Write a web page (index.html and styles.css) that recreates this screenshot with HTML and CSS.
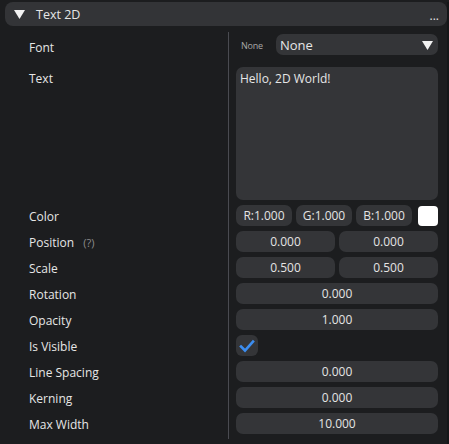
FILE: index.html
```html
<!DOCTYPE html>
<html lang="en">
<head>
<meta charset="utf-8">
<title>Inspector</title>
<link rel="stylesheet" href="styles.css">
</head>
<body>
<div class="panel">
  <div class="header">
    <svg class="caret" width="11" height="9" viewBox="0 0 11 9"><polygon points="0,0 11,0 5.5,9" fill="#f2f2f2"/></svg>
    <span class="title">Text 2D</span>
    <span class="more">...</span>
  </div>

  <div class="props">
    <div class="sep"></div>

    <div class="label first">Font</div>
    <div class="value font-row">
      <span class="tiny">None</span>
      <div class="combo">
        <span>None</span>
        <svg width="11" height="9" viewBox="0 0 11 9"><polygon points="0,0 11,0 5.5,9" fill="#f2f2f2"/></svg>
      </div>
    </div>

    <div class="label">Text</div>
    <div class="value"><div class="textarea">Hello, 2D World!</div></div>

    <div class="label">Color</div>
    <div class="value color-row">
      <div class="field">R:1.000</div>
      <div class="field">G:1.000</div>
      <div class="field">B:1.000</div>
      <div class="swatch"></div>
    </div>

    <div class="label">Position <span class="help">(?)</span></div>
    <div class="value pair">
      <div class="field">0.000</div>
      <div class="field">0.000</div>
    </div>

    <div class="label">Scale</div>
    <div class="value pair">
      <div class="field">0.500</div>
      <div class="field">0.500</div>
    </div>

    <div class="label">Rotation</div>
    <div class="value"><div class="field">0.000</div></div>

    <div class="label">Opacity</div>
    <div class="value"><div class="field">1.000</div></div>

    <div class="label">Is Visible</div>
    <div class="value">
      <div class="check">
        <svg width="16" height="14" viewBox="0 0 16 14"><polyline points="2,7.5 6,11.5 14,2.5" fill="none" stroke="#3c8df0" stroke-width="2.6" stroke-linecap="square"/></svg>
      </div>
    </div>

    <div class="label">Line Spacing</div>
    <div class="value"><div class="field">0.000</div></div>

    <div class="label">Kerning</div>
    <div class="value"><div class="field">0.000</div></div>

    <div class="label">Max Width</div>
    <div class="value"><div class="field">10.000</div></div>
  </div>
</div>
</body>
</html>
```

FILE: styles.css
```css
html, body {
  margin: 0;
  padding: 0;
  background: #1c1d1f;
}

body {
  width: 449px;
  height: 444px;
  overflow: hidden;
  font-family: "Open Sans", "Noto Sans", sans-serif;
  font-size: 12px;
  color: #e6e6e6;
}

.panel {
  border-right: 2px solid #151618;
  height: 444px;
  box-sizing: border-box;
}

.header {
  margin: 2px 0 0 5px;
  height: 24px;
  background: #333437;
  border-radius: 8px;
  display: flex;
  align-items: center;
  padding: 0 8px 0 9px;
}

.caret {
  margin-top: 1px;
}

.title {
  margin-left: 11px;
  font-size: 12.5px;
  flex: 1;
}

.more {
  font-size: 12px;
  letter-spacing: 0;
  line-height: 12px;
  margin-top: 3px;
}

.props {
  margin-top: 6px;
  padding: 0 9px 5px 0;
  display: grid;
  grid-template-columns: 228px 1px 1fr;
  row-gap: 5px;
}

.sep {
  grid-column: 2;
  grid-row: 1 / 13;
  background: #4a4b51;
}

.label {
  grid-column: 1;
  padding-left: 29px;
  padding-top: 1px;
  line-height: 21px;
  height: 20px;
  white-space: nowrap;
}

.label.first {
  padding-top: 5px;
}

.help {
  color: #8c8c8c;
  margin-left: 6px;
  font-size: 11px;
}

.value {
  grid-column: 3;
  padding-left: 7px;
  min-width: 0;
}

.field {
  height: 21px;
  line-height: 21px;
  background: #343538;
  border-radius: 7px;
  text-align: center;
  color: #e4e4e4;
}

.font-row {
  height: 30px;
  display: flex;
  align-items: flex-start;
  padding-top: 2px;
  box-sizing: border-box;
}

.tiny {
  box-sizing: border-box;
  flex: 0 0 40px;
  font-size: 9px;
  color: #a8a8a8;
  padding-left: 5px;
  line-height: 23px;
  letter-spacing: -0.2px;
}

.combo {
  flex: 1;
  height: 21px;
  background: #343538;
  border-radius: 7px;
  display: flex;
  align-items: center;
  justify-content: space-between;
  padding: 0 5px 0 4px;
  font-size: 13px;
}

.combo svg {
  margin-top: 1px;
}

.textarea {
  height: 133px;
  background: #343538;
  border-radius: 7px;
  padding: 3px 4px;
  box-sizing: border-box;
  line-height: 18px;
}

.color-row {
  display: flex;
  align-items: center;
}

.color-row .field {
  width: 56px;
  margin-right: 4px;
}

.color-row .field:nth-child(3) {
  margin-right: 6px;
}

.swatch {
  width: 20px;
  height: 20px;
  background: #ffffff;
  border-radius: 4px;
}

.pair {
  display: grid;
  grid-template-columns: 1fr 1fr;
  column-gap: 4px;
}

.check {
  width: 22px;
  height: 21px;
  background: #343538;
  border-radius: 6px;
  display: flex;
  align-items: center;
  justify-content: center;
}
```
